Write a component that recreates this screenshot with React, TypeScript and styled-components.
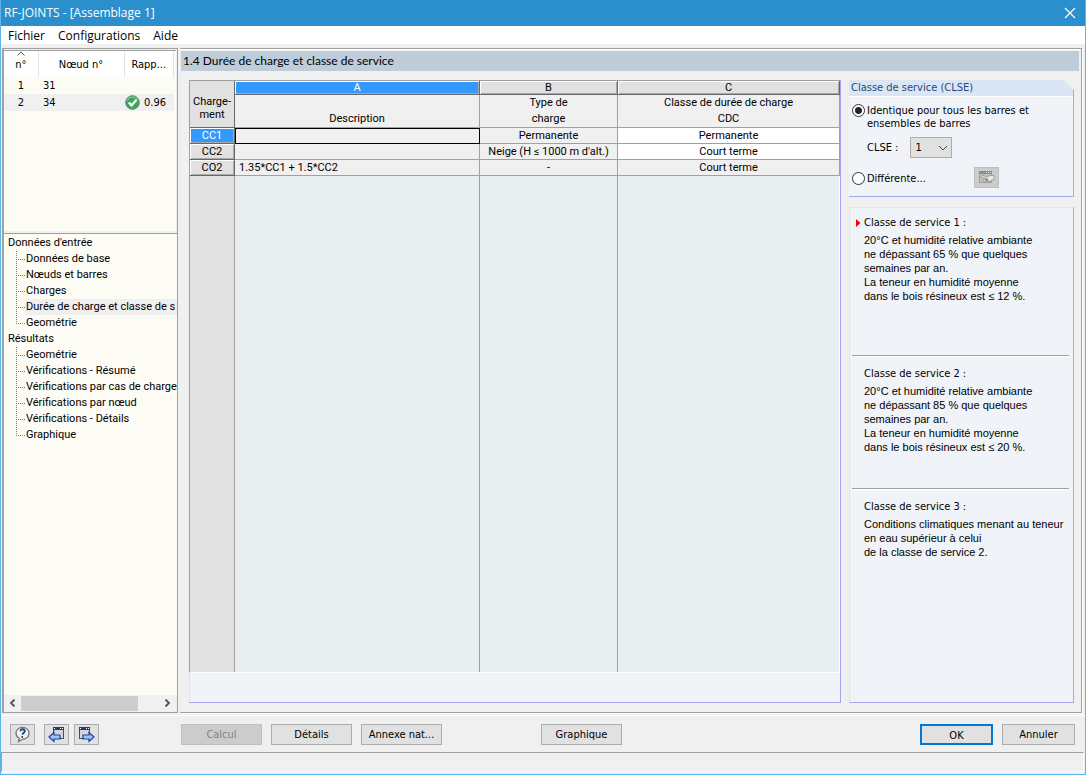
import React, { useState } from "react";
import styled, { createGlobalStyle, css } from "styled-components";

const color = {
  face: "#f0f0f0",
  line: "#a0a0a0",
  dark: "#696969",
  list: "#fcfcf4",
  panel: "#f0f4f9",
  panelEdge: "#dbe6f5",
  lavender: "#a6a6ee",
  select: "#3399ff",
  key: "#e1e1e1",
};

const dialogFont = `"DejaVu Sans Condensed", "DejaVu Sans", sans-serif`;
const titleFont = `"Open Sans", "Noto Sans", sans-serif`;
const headingFont = `Lato, "Open Sans", sans-serif`;
const gridFont = `Roboto, "Liberation Sans", sans-serif`;
const noteFont = `"Liberation Sans", Arial, sans-serif`;

const GlobalStyle = createGlobalStyle`
  *, *::before, *::after { box-sizing: border-box; }
  body { margin: 0; background: ${color.face}; color: #000; font: 11px/16px ${dialogFont}; }
  button, input, select { font: inherit; color: inherit; margin: 0; }
`;

const Window = styled.div`
  display: flex;
  flex-direction: column;
  min-height: 100vh;
  border: 1px solid #5db5ea;
  border-top: 0;
`;

const TitleBar = styled.header`
  display: flex;
  align-items: center;
  justify-content: space-between;
  height: 26px;
  padding: 0 9px 0 3px;
  background: #2a8fcc;
  color: #fff;
  font: 12px/18px ${titleFont};
`;

const CloseButton = styled.button`
  display: flex;
  padding: 0;
  border: 0;
  background: none;
`;

const MenuBar = styled.nav`
  display: flex;
  gap: 13px;
  height: 18px;
  padding: 0 7px;
  background: #fff;
  font: 12px/19px ${titleFont};
`;

const MenuItem = styled.button`
  padding: 0;
  border: 0;
  background: none;
`;

const Workspace = styled.div`
  display: flex;
  flex: 1;
  gap: 2px;
  padding: 4px 3px 2px 1px;
`;

const Sidebar = styled.aside`
  display: flex;
  flex-direction: column;
  width: 176px;
  border: 1px solid ${color.line};
  border-left-width: 2px;
  background: ${color.face};
`;

const NodeList = styled.div`
  height: 181px;
  margin: 1px 1px 2px 0;
  border-top: 1px solid ${color.line};
  background: ${color.list};
`;

const NodeTable = styled.table`
  width: 170px;
  border-collapse: collapse;
  table-layout: fixed;
  line-height: 17px;
`;

const NodeHead = styled.th`
  position: relative;
  height: 26px;
  padding: 1px 0 0;
  border-right: 1px solid #e2e2e2;
  background: #fff;
  font-weight: normal;
`;

const SortMark = styled.svg`
  position: absolute;
  top: 0;
  left: 50%;
  margin-left: -4px;
`;

const NodeRow = styled.tr<{ $active?: boolean }>`
  background: ${(p) => (p.$active ? color.face : "transparent")};
`;

const NodeCell = styled.td<{ $center?: boolean }>`
  height: 17px;
  padding: 0 0 0 ${(p) => (p.$center ? 0 : 5)}px;
  text-align: ${(p) => (p.$center ? "center" : "left")};
`;

const Ratio = styled.span`
  display: flex;
  align-items: center;
  gap: 4px;
  margin-left: -4px;
`;

const Tree = styled.nav`
  flex: 1;
  overflow: hidden;
  padding-top: 1px;
  border-top: 1px solid ${color.line};
  background: ${color.list};
  font-family: ${gridFont};
  white-space: nowrap;
`;

const TreeGroup = styled.div`
  padding-left: 4px;
`;

const TreeItems = styled.ul`
  margin: 0;
  padding: 0 0 0 8px;
  list-style: none;
`;

const TreeItem = styled.li`
  display: flex;
  height: 16px;
  background:
    repeating-linear-gradient(to bottom, #808080 0 1px, transparent 1px 2px) 0 0 / 1px 100% no-repeat,
    repeating-linear-gradient(to right, #808080 0 1px, transparent 1px 2px) 0 8px / 9px 1px no-repeat;

  &:last-child {
    background-size: 1px 8px, 9px 1px;
  }
`;

const TreeLink = styled.a<{ $active?: boolean }>`
  margin-left: 9px;
  padding-left: 1px;
  color: inherit;
  text-decoration: none;
  ${(p) => p.$active && css`flex: 1; background: #efefef;`}
`;

const ScrollBar = styled.div`
  display: grid;
  grid-template-columns: 17px 1fr 17px;
  align-items: center;
  justify-items: center;
  height: 16px;
  margin: 0 1px 1px 0;
  background: ${color.face};
`;

const ScrollTrack = styled.div`
  width: 100%;
  height: 15px;
`;

const ScrollThumb = styled.div`
  width: 85%;
  height: 100%;
  background: #cdcdcd;
`;

const Main = styled.main`
  display: flex;
  flex: 1;
  flex-direction: column;
  min-width: 0;
  border: solid ${color.line};
  border-width: 1px 1px 1px 0;
  box-shadow: 1px 1px 0 #fff, inset 0 1px 0 #fff;
`;

const PageTitle = styled.h1`
  margin: 2px 2px 0 1px;
  padding-left: 2px;
  background: #bfccda;
  font: 12px/20px ${headingFont};
`;

const Columns = styled.div`
  display: flex;
  flex: 1;
  gap: 8px;
  padding: 9px 7px 9px 9px;
`;

const GridPanel = styled.section`
  display: flex;
  flex: 1;
  flex-direction: column;
  min-width: 0;
  border: solid ${color.lavender};
  border-width: 0 1px 1px 0;
  background: ${color.panel};
  font-family: ${gridFont};
`;

const Grid = styled.table`
  width: 100%;
  border-collapse: separate;
  border-spacing: 0;
  table-layout: fixed;
  border-top: 1px solid ${color.line};
  border-left: 1px solid ${color.line};
`;

const raised = css`
  box-shadow: inset 1px 1px 0 #fff, inset -1px -1px 0 #a8a8a8;
`;

const GridLetter = styled.th<{ $active?: boolean }>`
  height: 14px;
  padding: 0;
  border: solid ${color.dark};
  border-width: 0 1px 1px 0;
  background: ${(p) => (p.$active ? color.select : color.key)};
  color: ${(p) => (p.$active ? "#fff" : "#000")};
  font-weight: normal;
  line-height: 13px;
  ${raised}
`;

const GridHead = styled.th`
  height: 33px;
  padding: 0;
  border: solid ${color.line};
  border-width: 0 1px 1px 0;
  background: ${color.face};
  font-weight: normal;
  line-height: 16px;
  vertical-align: bottom;
`;

const GridCorner = styled.th`
  padding: 8px 0 0;
  border: solid ${color.dark};
  border-width: 0 1px 1px 0;
  background: ${color.key};
  font-weight: normal;
  line-height: 13px;
`;

const GridKey = styled.th<{ $active?: boolean }>`
  height: 16px;
  padding: 0;
  border: solid ${color.dark};
  border-width: 0 1px 1px 0;
  background: ${(p) => (p.$active ? color.select : color.key)};
  color: ${(p) => (p.$active ? "#fff" : "#000")};
  font-weight: normal;
  line-height: 15px;
  ${raised}
`;

const GridCell = styled.td<{ $left?: boolean; $white?: boolean; $cursor?: boolean }>`
  height: 16px;
  padding: 0 4px;
  border: solid ${color.line};
  border-width: 0 1px 1px 0;
  background: ${(p) => (p.$white ? "#fff" : color.face)};
  line-height: 15px;
  text-align: ${(p) => (p.$left ? "left" : "center")};
  white-space: nowrap;
  ${(p) => p.$cursor && css`outline: 1px solid #000; outline-offset: -1px;`}
`;

const GridRest = styled.div`
  display: grid;
  flex: 1;
  grid-template-columns: 45px 245px 138px 1fr;
  border-left: 1px solid ${color.line};
  border-bottom: 1px solid #fff;
  background: #e8eeee;
`;

const RestColumn = styled.div<{ $key?: boolean }>`
  border-right: 1px solid ${color.line};
  background: ${(p) => (p.$key ? color.key : "transparent")};

  &:last-child {
    border-right: 1px solid #fff;
  }
`;

const GridFooter = styled.div`
  height: 29px;
  border-left: 1px solid ${color.panelEdge};
`;

const Options = styled.aside`
  display: flex;
  flex-direction: column;
  gap: 10px;
  width: 225px;
`;

const ServiceBox = styled.section`
  height: 117px;
  border: solid ${color.lavender};
  border-width: 0 1px 1px 0;
  background: ${color.panel};
  clip-path: polygon(0 0, 215px 0, 100% 10px, 100% 100%, 0 100%);
`;

const BoxTitle = styled.h2`
  margin: 0;
  padding-left: 2px;
  border-bottom: 1px solid #fff;
  background: ${color.panelEdge};
  color: #1e4b7a;
  font: 11px/16px ${dialogFont};
`;

const RadioRow = styled.div`
  display: flex;
  gap: 2px;
  padding: 7px 3px 0;
  line-height: 13px;
`;

const Radio = styled.input`
  flex: none;
  width: 13px;
  height: 13px;
  border: 1px solid #333;
  border-radius: 50%;
  appearance: none;
  background: #fff;

  &:checked {
    background: radial-gradient(circle, #222 0 3px, #fff 4px);
  }
`;

const ClassRow = styled.div`
  display: flex;
  align-items: center;
  gap: 12px;
  padding: 7px 0 9px 18px;
`;

const SelectBox = styled.span`
  display: grid;
  align-items: center;
  width: 42px;
  height: 21px;
  border: 1px solid #adadad;
  background: ${color.key};

  & > * {
    grid-area: 1 / 1;
  }

  & > svg {
    justify-self: end;
    margin-right: 3px;
    pointer-events: none;
  }
`;

const Select = styled.select`
  width: 100%;
  height: 19px;
  padding: 0 4px;
  border: 0;
  appearance: none;
  background: none;
`;

const DifferentRow = styled.div`
  display: flex;
  align-items: center;
  justify-content: space-between;
  padding: 0 74px 0 3px;
`;

const RadioLabel = styled.label`
  display: flex;
  align-items: center;
  gap: 2px;
  padding-top: 2px;
`;

const InfoBox = styled.section`
  flex: 1;
  border: 1px solid ${color.panelEdge};
  border-right-color: ${color.lavender};
  border-bottom-color: ${color.lavender};
  background: ${color.panel};
  padding: 0 4px 0 2px;
`;

const InfoBlock = styled.article<{ $height: number }>`
  min-height: ${(p) => p.$height}px;
  padding: 7px 0 0 12px;
  border-bottom: 1px solid ${color.line};
  box-shadow: 0 1px 0 #fff;

  & + & {
    padding-top: 10px;
  }

  &:last-child {
    border-bottom: 0;
    box-shadow: none;
  }
`;

const InfoTitle = styled.h3`
  display: flex;
  align-items: center;
  gap: 3px;
  margin: 0 0 2px;
  font: 11px/16px ${dialogFont};

  & > svg {
    margin-left: -8px;
  }
`;

const InfoText = styled.p`
  margin: 0;
  font: 11px/14px ${noteFont};
  white-space: pre-line;
`;

const Footer = styled.footer`
  display: flex;
  align-items: center;
  height: 37px;
  padding: 0 10px 0 9px;
  gap: 9px;
  border-top: 1px solid #fff;
`;

const Tools = styled.div`
  display: flex;
  gap: 5px;
  width: 162px;

  & > :first-child {
    margin-right: 4px;
  }
`;

const ToolButton = styled.button`
  display: flex;
  align-items: center;
  justify-content: center;
  width: 25px;
  height: 21px;
  padding: 0;
  border: 1px solid #adadad;
  background: ${color.key};

  &:disabled {
    border-color: #bfbfbf;
    background: #cccccc;
  }
`;

const PushButton = styled.button<{ $wide?: boolean }>`
  width: ${(p) => (p.$wide ? 81 : 73)}px;
  height: 21px;
  padding: 2px 0 0;
  border: 1px solid #adadad;
  background: ${color.key};
  white-space: nowrap;

  &:disabled {
    border-color: #bfbfbf;
    background: #cccccc;
    color: #838383;
  }
`;

const DefaultButton = styled(PushButton)`
  border: 2px solid #0078d7;
`;

const Spacer = styled.div<{ $width?: number }>`
  ${(p) => (p.$width ? css`width: ${p.$width}px;` : css`flex: 1;`)}
`;

const StatusBar = styled.div`
  height: 20px;
  margin: 0 1px 2px 0;
  border: 1px solid ${color.line};
  border-right-color: #fff;
  border-bottom-color: #fff;
`;

const WindowIcon = ({ x }: { x: number }) => (
  <g>
    <rect x={x + 0.5} y="1.5" width="10" height="11" fill="#d6d6da" stroke="#4c4c50" />
    <rect x={x} y="1" width="11" height="3" fill="#23388c" />
    <path d={`M${x + 1} 2.5h1M${x + 7} 2.5h1M${x + 9} 2.5h1`} stroke="#fff" />
  </g>
);

const nodes = [
  { id: 1, node: 31 },
  { id: 2, node: 34, ratio: "0.96" },
];

const tree = [
  {
    title: "Données d'entrée",
    items: ["Données de base", "Nœuds et barres", "Charges", "Durée de charge et classe de s", "Geométrie"],
  },
  {
    title: "Résultats",
    items: [
      "Geométrie",
      "Vérifications - Résumé",
      "Vérifications par cas de charge",
      "Vérifications par nœud",
      "Vérifications - Détails",
      "Graphique",
    ],
  },
];

const loads = [
  { key: "CC1", text: "", type: "Permanente", duration: "Permanente" },
  { key: "CC2", text: "", type: "Neige (H ≤ 1000 m d'alt.)", duration: "Court terme" },
  { key: "CO2", text: "1.35*CC1 + 1.5*CC2", type: "-", duration: "Court terme" },
];

const classes = [
  {
    height: 148,
    text: "20°C et humidité relative ambiante\nne dépassant 65 % que quelques\nsemaines par an.\nLa teneur en humidité moyenne\ndans le bois résineux est ≤ 12 %.",
  },
  {
    height: 133,
    text: "20°C et humidité relative ambiante\nne dépassant 85 % que quelques\nsemaines par an.\nLa teneur en humidité moyenne\ndans le bois résineux est ≤ 20 %.",
  },
  {
    height: 60,
    text: "Conditions climatiques menant au teneur\nen eau supérieur à celui\nde la classe de service 2.",
  },
];

export default function App() {
  const [mode, setMode] = useState("same");
  const [serviceClass, setServiceClass] = useState("1");

  return (
    <Window>
      <GlobalStyle />
      <TitleBar>
        <span>RF-JOINTS - [Assemblage 1]</span>
        <CloseButton aria-label="Fermer">
          <svg width="12" height="12" viewBox="0 0 12 12">
            <path d="M1 1l10 10M11 1L1 11" stroke="#fff" strokeWidth="1.2" />
          </svg>
        </CloseButton>
      </TitleBar>
      <MenuBar>
        <MenuItem>Fichier</MenuItem>
        <MenuItem>Configurations</MenuItem>
        <MenuItem>Aide</MenuItem>
      </MenuBar>

      <Workspace>
        <Sidebar>
          <NodeList>
            <NodeTable>
              <colgroup>
                <col style={{ width: 34 }} />
                <col style={{ width: 86 }} />
                <col />
              </colgroup>
              <thead>
                <tr>
                  <NodeHead>
                    <SortMark width="8" height="5" viewBox="0 0 8 5">
                      <path d="M0.5 4.5L4 1l3.500 3.500" fill="none" stroke="#555" />
                    </SortMark>
                    n°
                  </NodeHead>
                  <NodeHead>Nœud n°</NodeHead>
                  <NodeHead>Rapp...</NodeHead>
                </tr>
              </thead>
              <tbody>
                {nodes.map((n) => (
                  <NodeRow key={n.id} $active={n.id === 2}>
                    <NodeCell $center>{n.id}</NodeCell>
                    <NodeCell>{n.node}</NodeCell>
                    <NodeCell>
                      {n.ratio && (
                        <Ratio>
                          <svg width="15" height="15" viewBox="0 0 15 15">
                            <circle cx="7.500" cy="7.500" r="6.800" fill="#3fa65c" stroke="#66806c" />
                            <path d="M2 6a6 6 0 0 1 11-1" fill="none" stroke="#8fd0a0" />
                            <path d="M3.800 7.500l2.700 2.900L11.500 4.800" fill="none" stroke="#fff" strokeWidth="2.300" />
                          </svg>
                          {n.ratio}
                        </Ratio>
                      )}
                    </NodeCell>
                  </NodeRow>
                ))}
              </tbody>
            </NodeTable>
          </NodeList>
          <Tree>
            {tree.map((group) => (
              <TreeGroup key={group.title}>
                {group.title}
                <TreeItems>
                  {group.items.map((item) => (
                    <TreeItem key={item}>
                      <TreeLink href="#" $active={item.startsWith("Durée")}>
                        {item}
                      </TreeLink>
                    </TreeItem>
                  ))}
                </TreeItems>
              </TreeGroup>
            ))}
          </Tree>
          <ScrollBar>
            <svg width="7" height="8" viewBox="0 0 7 8">
              <path d="M5.500 0.500L2 4l3.500 3.500" fill="none" stroke="#505050" strokeWidth="1.800" />
            </svg>
            <ScrollTrack>
              <ScrollThumb />
            </ScrollTrack>
            <svg width="7" height="8" viewBox="0 0 7 8">
              <path d="M1.500 0.500L5 4L1.500 7.500" fill="none" stroke="#505050" strokeWidth="1.800" />
            </svg>
          </ScrollBar>
        </Sidebar>

        <Main>
          <PageTitle>1.4 Durée de charge et classe de service</PageTitle>
          <Columns>
            <GridPanel>
              <Grid>
                <colgroup>
                  <col style={{ width: 45 }} />
                  <col style={{ width: 245 }} />
                  <col style={{ width: 138 }} />
                  <col />
                </colgroup>
                <thead>
                  <tr>
                    <GridCorner rowSpan={2}>
                      Charge-
                      <br />
                      ment
                    </GridCorner>
                    <GridLetter $active>A</GridLetter>
                    <GridLetter>B</GridLetter>
                    <GridLetter>C</GridLetter>
                  </tr>
                  <tr>
                    <GridHead>Description</GridHead>
                    <GridHead>
                      Type de
                      <br />
                      charge
                    </GridHead>
                    <GridHead>
                      Classe de durée de charge
                      <br />
                      CDC
                    </GridHead>
                  </tr>
                </thead>
                <tbody>
                  {loads.map((load, i) => (
                    <tr key={load.key}>
                      <GridKey $active={i === 0}>{load.key}</GridKey>
                      <GridCell $left $cursor={i === 0}>{load.text}</GridCell>
                      <GridCell>{load.type}</GridCell>
                      <GridCell $white={i < 2}>{load.duration}</GridCell>
                    </tr>
                  ))}
                </tbody>
              </Grid>
              <GridRest>
                <RestColumn $key />
                <RestColumn />
                <RestColumn />
                <RestColumn />
              </GridRest>
              <GridFooter />
            </GridPanel>

            <Options>
              <ServiceBox>
                <BoxTitle>Classe de service (CLSE)</BoxTitle>
                <RadioRow>
                  <Radio
                    type="radio"
                    name="mode"
                    id="mode-same"
                    checked={mode === "same"}
                    onChange={() => setMode("same")}
                  />
                  <label htmlFor="mode-same">
                    Identique pour tous les barres et
                    <br />
                    ensembles de barres
                  </label>
                </RadioRow>
                <ClassRow>
                  <label htmlFor="clse">CLSE :</label>
                  <SelectBox>
                    <Select id="clse" value={serviceClass} onChange={(e) => setServiceClass(e.target.value)}>
                      <option>1</option>
                      <option>2</option>
                      <option>3</option>
                    </Select>
                    <svg width="10" height="6" viewBox="0 0 10 6">
                      <path d="M1 1l4 4l4-4" fill="none" stroke="#444" />
                    </svg>
                  </SelectBox>
                </ClassRow>
                <DifferentRow>
                  <RadioLabel>
                    <Radio
                      type="radio"
                      name="mode"
                      checked={mode === "different"}
                      onChange={() => setMode("different")}
                    />
                    Différente...
                  </RadioLabel>
                  <ToolButton disabled aria-label="Modifier">
                    <svg width="17" height="15" viewBox="0 0 17 15">
                      <rect x="1.500" y="1.500" width="12" height="11" fill="#c2c2bc" stroke="#a2a29c" />
                      <path d="M1 2.500h13" stroke="#8c8c88" strokeWidth="3" />
                      <path d="M8 2.500h1M10 2.500h1M12 2.500h1" stroke="#e4e4e0" />
                      <path
                        d="M16 5.500h-3.500L9 6.500 4 5.500 2.500 7l4 1.500-2 1L7 12l2.500-1 2.500.5L14 10h2z"
                        fill="#e9e9e3"
                        stroke="#8a8a84"
                        strokeWidth="0.700"
                      />
                      <path d="M5 6.500l4 1.500 2 2.500-3 .5-2-1.500 2-1z" fill="#8f8f89" />
                    </svg>
                  </ToolButton>
                </DifferentRow>
              </ServiceBox>

              <InfoBox>
                {classes.map((item, i) => (
                  <InfoBlock key={i} $height={item.height}>
                    <InfoTitle>
                      {String(i + 1) === serviceClass && (
                        <svg width="5" height="8" viewBox="0 0 5 8">
                          <path d="M0 0l4.500 4L0 8z" fill="#f00" />
                        </svg>
                      )}
                      Classe de service {i + 1} :
                    </InfoTitle>
                    <InfoText>{item.text}</InfoText>
                  </InfoBlock>
                ))}
              </InfoBox>
            </Options>
          </Columns>
        </Main>
      </Workspace>

      <Footer>
        <Tools>
          <ToolButton aria-label="Aide">
            <svg width="17" height="17" viewBox="0 0 17 17">
              <path
                d="M8.500 1.500c4 0 6.500 2.600 6.500 5.800s-2.500 5.700-6 5.900L4.500 15.500l.8-3.200C3.200 11.200 2 9.500 2 7.300c0-3.200 2.500-5.800 6.500-5.800z"
                fill="#f4f4f4"
                stroke="#777"
                strokeWidth="1.300"
              />
              <path
                d="M6.300 5.200c.3-1.400 1.300-2 2.500-1.900 1.500.1 2.200 1.100 2 2.100-.3 1.500-2.100 1.500-2.400 3.300"
                fill="none"
                stroke="#27408f"
                strokeWidth="1.900"
              />
              <circle cx="8.200" cy="11" r="1.100" fill="#27408f" />
            </svg>
          </ToolButton>
          <ToolButton aria-label="Page précédente">
            <svg width="17" height="17" viewBox="0 0 17 17">
              <WindowIcon x={5} />
              <path d="M1 11l5-4.500V9h6v4H6v2.500z" fill="#9cc4ff" stroke="#1c3fa0" strokeWidth="1.200" />
            </svg>
          </ToolButton>
          <ToolButton aria-label="Page suivante">
            <svg width="17" height="17" viewBox="0 0 17 17">
              <WindowIcon x={1} />
              <path d="M16 11l-5-4.500V9H5v4h6v2.500z" fill="#9cc4ff" stroke="#1c3fa0" strokeWidth="1.200" />
            </svg>
          </ToolButton>
        </Tools>
        <PushButton $wide disabled>Calcul</PushButton>
        <PushButton $wide>Détails</PushButton>
        <PushButton $wide>Annexe nat...</PushButton>
        <Spacer $width={81} />
        <PushButton $wide>Graphique</PushButton>
        <Spacer />
        <DefaultButton>OK</DefaultButton>
        <PushButton>Annuler</PushButton>
      </Footer>
      <StatusBar />
    </Window>
  );
}
